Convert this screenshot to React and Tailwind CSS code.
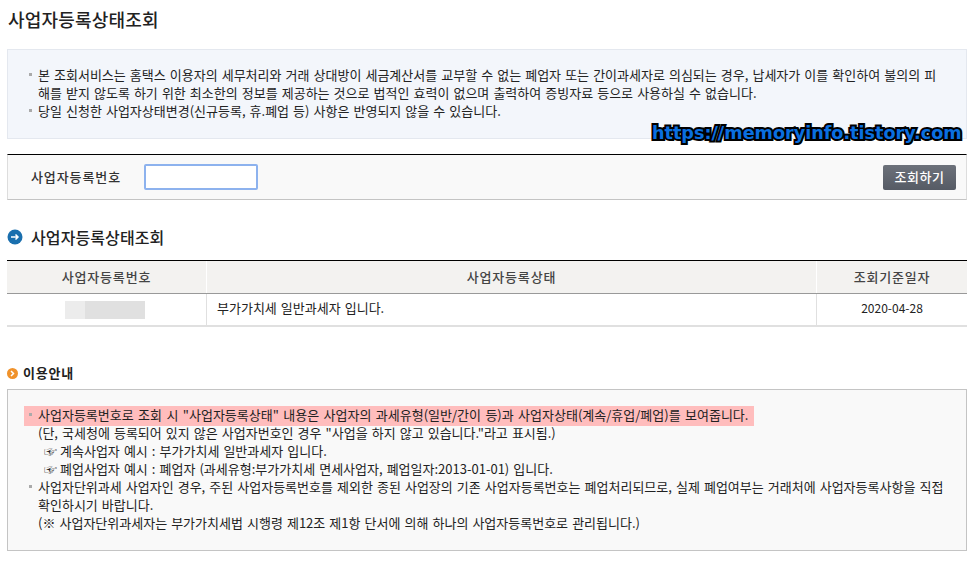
const KR = { fontFamily: '"Noto Sans CJK KR", "Noto Sans", sans-serif' };

const Bullet = () => (
  <span className="absolute left-[-9px] top-[7px] w-[3px] h-[3px] bg-[#aaa]"></span>
);

const Item = ({ children }) => (
  <div className="relative">
    <Bullet />
    {children}
  </div>
);

const BlueDot = () => (
  <svg width="16" height="16" viewBox="0 0 16 16">
    <circle cx="8" cy="8" r="7.5" fill="#1a6fae" />
    <path d="M4 8h7M8.5 5.5L11 8l-2.5 2.5" fill="none" stroke="#fff" strokeWidth="1.5" />
  </svg>
);

const OrangeDot = () => (
  <svg width="11" height="11" viewBox="0 0 11 11">
    <circle cx="5.5" cy="5.5" r="5.5" fill="#f0922b" />
    <path d="M4 3l2.5 2.5L4 8" fill="none" stroke="#fff" strokeWidth="1.5" />
  </svg>
);

export default function App() {
  return (
    <div className="relative w-[972px] h-[561px] bg-white overflow-hidden text-[13px] text-[#222] leading-[18px] [word-spacing:1.15px]" style={KR}>
      <div className="pl-[7px] pr-[5px]">
        <h1 className="pt-[7px] pl-[1px] h-[49px] text-[18px] leading-[24px] font-medium text-[#222] tracking-[0.2px]">사업자등록상태조회</h1>

        {/* 안내 박스 */}
        <div className="h-[90px] border border-[#e4e8ef] bg-[#f3f6fb] pt-[16px] pl-[30px]">
          <Item>본 조회서비스는 홈택스 이용자의 세무처리와 거래 상대방이 세금계산서를 교부할 수 없는 폐업자 또는 간이과세자로 의심되는 경우, 납세자가 이를 확인하여 불의의 피<br />해를 받지 않도록 하기 위한 최소한의 정보를 제공하는 것으로 법적인 효력이 없으며 출력하여 증빙자료 등으로 사용하실 수 없습니다.</Item>
          <Item>당일 신청한 사업자상태변경(신규등록, 휴.폐업 등) 사항은 반영되지 않을 수 있습니다.</Item>
        </div>

        {/* 조회 폼 */}
        <div className="mt-[15px] h-[46px] border-t border-t-black border-b border-b-[#c4c4c4] border-x border-x-[#ddd] bg-[#f9f9f9] flex items-center justify-between pl-[23px] pr-[10px]">
          <div className="flex items-center">
            <label className="w-[113px] font-medium text-[#333] tracking-[0.9px]">사업자등록번호</label>
            <input className="w-[114px] h-[26px] bg-white border-2 border-[#8db2ee] rounded-[2px]" />
          </div>
          <button className="w-[73px] h-[25px] rounded-[2px] bg-linear-to-b from-[#6c717a] to-[#565b65] text-white font-medium text-[13px] tracking-[0.5px]">조회하기</button>
        </div>

        {/* 결과 */}
        <div className="mt-[27px] flex items-center gap-[8px] h-[20px]">
          <BlueDot />
          <h2 className="text-[16px] font-medium text-[#222] tracking-[0.1px]">사업자등록상태조회</h2>
        </div>
        <div className="mt-[13px] border-t border-t-black">
          <div className="flex h-[33px] bg-[#f3f2f0] border-b border-b-[#999] font-medium text-[#444] tracking-[0.8px]">
            <div className="w-[200px] flex items-center justify-center border-r border-r-white">사업자등록번호</div>
            <div className="flex-1 flex items-center justify-center border-r border-r-white">사업자등록상태</div>
            <div className="w-[150px] flex items-center justify-center">조회기준일자</div>
          </div>
          <div className="flex h-[33px] border-b-2 border-b-[#e0e0e0]">
            <div className="w-[200px] flex items-center pl-[58px] border-r border-r-[#e0e0e0]">
              <div className="flex h-[18px] w-[80px]">
                <div className="w-[20px] bg-[#ececec]"></div>
                <div className="flex-1 bg-[#e0e0e0]"></div>
              </div>
            </div>
            <div className="flex-1 flex items-center pl-[10px] pb-[3px] border-r border-r-[#e0e0e0]">부가가치세 일반과세자 입니다.</div>
            <div className="w-[150px] flex items-center justify-center pb-[3px] text-[12px]">2020-04-28</div>
          </div>
        </div>

        {/* 이용안내 */}
        <div className="mt-[37px] flex items-center gap-[5px] h-[18px]">
          <OrangeDot />
          <h3 className="font-bold text-[#222] tracking-[0.8px]">이용안내</h3>
        </div>
        <div className="mt-[7px] h-[162px] border border-[#c4c4c4] bg-[#f9f9f9] pt-[16px] pl-[30px]">
          <div className="relative w-fit">
            <span className="absolute left-[-14px] top-[0px] w-[730px] h-[20px] bg-[#ffbdbd]"></span>
            <div className="relative [word-spacing:1.5px]"><Item>사업자등록번호로 조회 시 "사업자등록상태" 내용은 사업자의 과세유형(일반/간이 등)과 사업자상태(계속/휴업/폐업)를 보여줍니다.</Item></div>
          </div>
          <div>(단, 국세청에 등록되어 있지 않은 사업자번호인 경우 "사업을 하지 않고 있습니다."라고 표시됨.)</div>
          <div className="pl-[6px]"><span className="mr-[3px]">☞</span>계속사업자 예시 : 부가가치세 일반과세자 입니다.</div>
          <div className="pl-[6px]"><span className="mr-[3px]">☞</span>폐업사업자 예시 : 폐업자 (과세유형:부가가치세 면세사업자, 폐업일자:2013-01-01) 입니다.</div>
          <Item>사업자단위과세 사업자인 경우, 주된 사업자등록번호를 제외한 종된 사업장의 기존 사업자등록번호는 폐업처리되므로, 실제 폐업여부는 거래처에 사업자등록사항을 직접<br />확인하시기 바랍니다.</Item>
          <div>(※ 사업자단위과세자는 부가가치세법 시행령 제12조 제1항 단서에 의해 하나의 사업자등록번호로 관리됩니다.)</div>
        </div>
      </div>

      {/* 워터마크 */}
      <div className="absolute left-[652px] top-[120px] text-[#0a6fe0] font-bold text-[17.6px] leading-[26px] whitespace-nowrap [word-spacing:0] [-webkit-text-stroke:4px_#000] [paint-order:stroke_fill]" style={{ fontFamily: '"DejaVu Sans", sans-serif' }}>https://memoryinfo.tistory.com</div>
    </div>
  );
}
